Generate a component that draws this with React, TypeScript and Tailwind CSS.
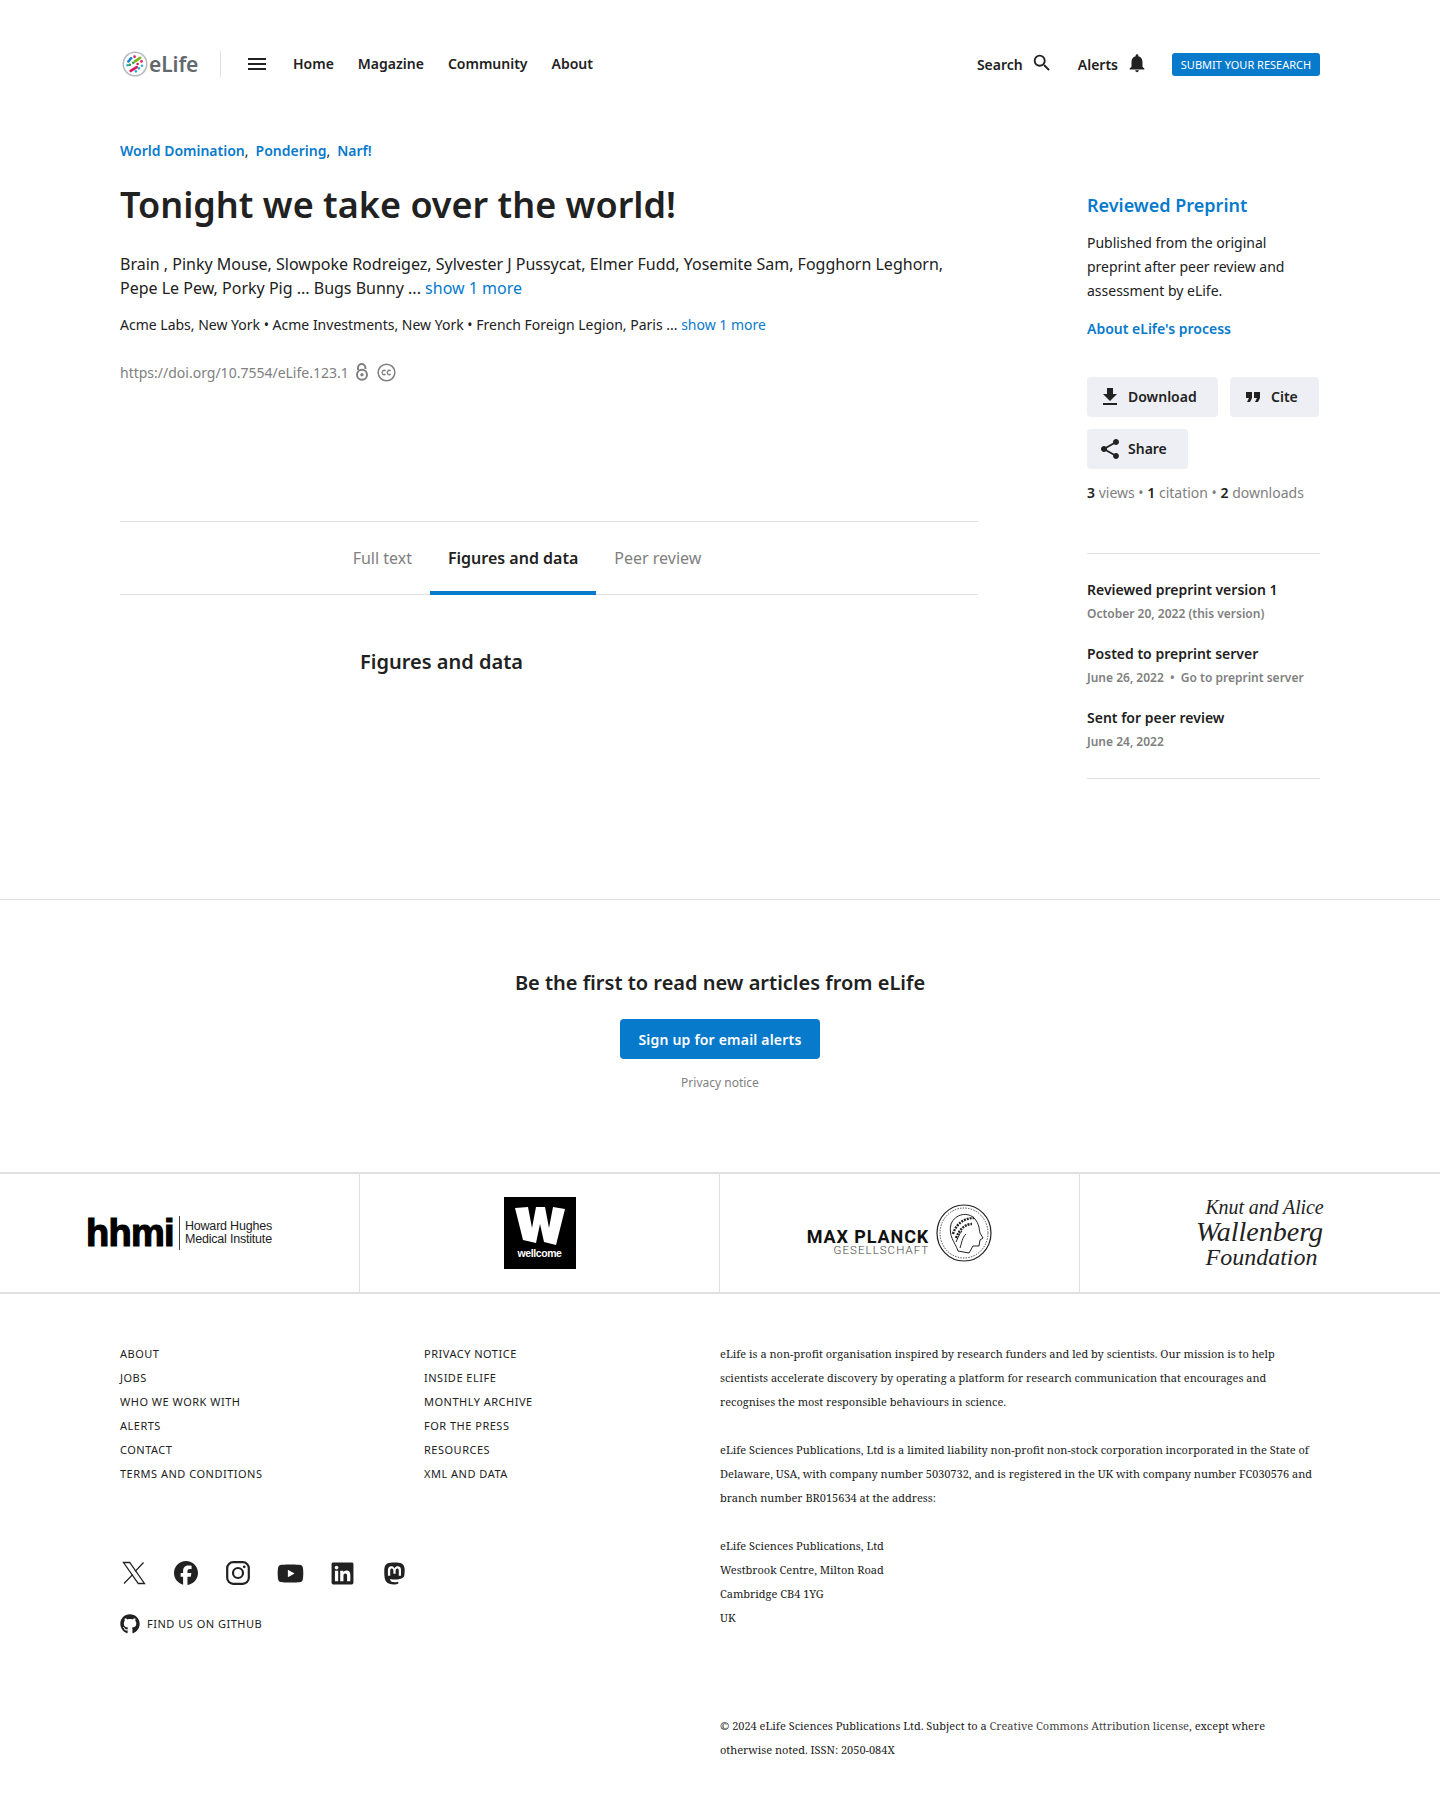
import React from "react";
import { FaFacebook, FaYoutube, FaLinkedin, FaMastodon, FaGithub } from "react-icons/fa6";
import { MdSearch, MdNotifications, MdFileDownload, MdFormatQuote, MdShare, MdMenu } from "react-icons/md";

const SANS = "font-['Noto_Sans',sans-serif]";

function Logo() {
  const d: [number, number, string][] = [
    [10.5, 8.5, "#0a7cc7"], [14.5, 6.5, "#d81b60"], [7.5, 12, "#0a7cc7"], [6.5, 16.5, "#29a9e0"], [18, 15, "#d81b60"], [13, 13.5, "#2e9e3f"],
    [9, 16, "#2e9e3f"], [22.5, 12, "#d81b60"], [23, 17, "#29a9e0"], [19.5, 20, "#29a9e0"], [16, 23.5, "#29a9e0"], [9, 10, "#0a7cc7"],
  ];
  return (
    <svg width="26" height="26" viewBox="0 0 30 30">
      <circle cx="15" cy="15" r="13.6" fill="#fff" stroke="#b9bcbf" strokeWidth="1.8" />
      {d.map(([x, y, c], i) => <circle key={i} cx={x} cy={y} r="1.5" fill={c} />)}
      <path d="M15 12 L21 8" stroke="#7ab51d" strokeWidth="3" strokeLinecap="round" />
      <path d="M10 23 L17 18.5" stroke="#d81b60" strokeWidth="3" strokeLinecap="round" />
    </svg>
  );
}

function OpenAccess() {
  return (
    <svg width="14" height="18" viewBox="0 0 14 18" fill="none" stroke="#808080" strokeWidth="2">
      <path d="M3 7 V4.7 a3.7 3.7 0 0 1 7.4 0 V6" />
      <circle cx="7" cy="11.7" r="5" />
      <circle cx="7" cy="11.7" r="1.7" fill="#808080" stroke="none" />
    </svg>
  );
}

function CC() {
  return (
    <svg width="19" height="19" viewBox="0 0 20 20" fill="none" stroke="#808080">
      <circle cx="10" cy="10" r="8.8" strokeWidth="1.6" />
      <path d="M9 8.3 a2.2 2.2 0 1 0 0 3.4 M14.4 8.3 a2.2 2.2 0 1 0 0 3.4" strokeWidth="1.4" />
    </svg>
  );
}

function XLogo() {
  return (
    <svg width="24" height="24" viewBox="0 0 24 24" fill="none" stroke="#212121" strokeWidth="1.3">
      <path d="M1.5 1.5 H7.7 L22.5 22.5 H16.3 Z" />
      <path d="M21.5 1.5 L13.2 10.4 M10.6 13.6 L2 22.5" />
    </svg>
  );
}

function Insta() {
  return (
    <svg width="24" height="24" viewBox="0 0 24 24" fill="none" stroke="#212121" strokeWidth="2.2">
      <rect x="1.2" y="1.2" width="21.6" height="21.6" rx="6" />
      <circle cx="12" cy="12" r="5" />
      <circle cx="18.2" cy="5.8" r="1.4" fill="#212121" stroke="none" />
    </svg>
  );
}

function Btn({ icon, label, w }: { icon: React.ReactNode; label: string; w: string }) {
  return (
    <div className={`h-10 ${w} rounded bg-[#eeeff4] flex items-center pl-[11px] text-[#212121] text-sm font-semibold leading-none`}>
      <span className="w-6 flex justify-center mr-[6px]">{icon}</span>
      <span>{label}</span>
    </div>
  );
}

function Logos() {
  return (
    <div className="flex h-[122px] border-y-2 border-[#e0e0e0]">
      <div className="w-[360px] flex items-center justify-center border-r border-[#e0e0e0]">
        <div className="flex items-center mr-[1px]">
          <span className="font-['Liberation_Sans',sans-serif] font-bold text-[#000] text-[38px] leading-none tracking-[-0.7px] [-webkit-text-stroke:1.2px_#000]">hhmi</span>
          <span className="w-px h-[34px] bg-[#444] ml-[5px] mr-[5px]"></span>
          <span className="font-['Liberation_Sans',sans-serif] text-[#222] text-[12.5px] leading-[13px] tracking-[-0.2px]">Howard Hughes<br />Medical Institute</span>
        </div>
      </div>
      <div className="w-[360px] flex items-center justify-center border-r border-[#e0e0e0]">
        <div className="w-[72px] h-[72px] bg-black flex flex-col items-center pt-[10px]">
          <svg width="50" height="38" viewBox="0 0 50 38"><path fill="#fff" d="M0 1 L13 0 L17 21 L21 0 L30 0 L34 21 L38 0 L50 2 L41 38 L29 35 L25 17 L21 36 L8 33 Z" /></svg>
          <span className="font-['Liberation_Sans',sans-serif] text-white font-bold text-[10.5px] leading-none mt-[3px] tracking-[-0.4px]">wellcome</span>
        </div>
      </div>
      <div className="w-[360px] flex items-center justify-center border-r border-[#e0e0e0]">
        <div className="flex items-center">
          <div className="flex flex-col items-end mt-[17px] font-['Roboto',sans-serif]">
            <span className="font-bold text-[#111] text-[18px] leading-[17px] tracking-[0.9px]">MAX PLANCK</span>
            <span className="font-light text-[#444] text-[11.5px] leading-[11px] tracking-[1.05px]">GESELLSCHAFT</span>
          </div>
          <svg width="56" height="58" viewBox="0 0 56 58" className="ml-[7px]" fill="none" stroke="#222">
            <ellipse cx="28" cy="29" rx="27" ry="28" strokeWidth="1.2" />
            <ellipse cx="28" cy="29" rx="24" ry="25" strokeWidth="0.8" strokeDasharray="1.5 1.2" />
            <path d="M22 47 C19 38 12 32 15 20 C19 10 32 7 39 15 C43 20 43 24 44 29 L47 34 L44 36 L43 42 L37 42 L33 49 Z" strokeWidth="1" fill="#fff" />
            <path d="M17 30 C20 20 28 14 38 14 M20 34 C24 24 30 20 36 20" strokeWidth="2.4" strokeDasharray="2 1" />
            <path d="M24 44 C26 38 26 34 30 30 M20 38 C22 34 23 30 26 27" strokeWidth="1" />
          </svg>
        </div>
      </div>
      <div className="w-[360px] flex items-center justify-center">
        <div className="font-['Liberation_Serif',serif] italic text-[#222] text-center -ml-[1px] -mt-[3px]">
          <div className="text-[20px] leading-[24px] ml-[10px] tracking-[-0.1px]">Knut and Alice</div>
          <div className="text-[28px] leading-[26px]">Wallenberg</div>
          <div className="text-[24px] leading-[24px] ml-[4px]">Foundation</div>
        </div>
      </div>
    </div>
  );
}

function Social({ children }: { children: React.ReactNode }) {
  return <span className="w-[28px] h-[28px] flex items-center justify-center">{children}</span>;
}

export default function App() {
  const L1 = ["ABOUT", "JOBS", "WHO WE WORK WITH", "ALERTS", "CONTACT", "TERMS AND CONDITIONS"];
  const L2 = ["PRIVACY NOTICE", "INSIDE ELIFE", "MONTHLY ARCHIVE", "FOR THE PRESS", "RESOURCES", "XML AND DATA"];
  return (
    <div className={`${SANS} bg-white text-[#212121] w-[1440px] h-[1798px] overflow-hidden`}>
      {/* Header */}
      <header className="w-[1200px] mx-auto pt-[48px] h-[130px] flex items-start">
        <div className="flex items-center h-[32px] w-full">
          <div className="flex items-center pl-[2px] w-[101px] border-r border-[#e0e0e0] h-[26px]">
            <Logo />
            <span className="text-[#63686d] font-semibold text-[21px] leading-none ml-[1px] tracking-[-0.1px]">eLife</span>
          </div>
          <MdMenu size={24} className="ml-[24px] text-[#212121]" />
          <nav className="flex gap-[24px] ml-[24px] text-sm font-semibold leading-none">
            <span>Home</span><span>Magazine</span><span>Community</span><span>About</span>
          </nav>
          <div className="ml-auto flex items-center text-sm font-semibold leading-none">
            <span className="mt-[1px]">Search</span>
            <MdSearch size={22} className="ml-[8px] -mt-[3px]" />
            <span className="ml-[25px] mt-[1px]">Alerts</span>
            <MdNotifications size={22} className="ml-[8px] -mt-[3px]" />
            <span className="ml-[24px] bg-[#087acc] text-white font-normal text-[11px] leading-none rounded-[3px] h-[23px] w-[148px] flex items-center justify-center mt-[1px]">SUBMIT YOUR RESEARCH</span>
          </div>
        </div>
      </header>

      {/* Main */}
      <div className="w-[1200px] mx-auto flex h-[769px]">
        <main className="w-[858px]">
          <div className="text-sm font-semibold text-[#087acc] leading-[20px] mt-[11px]">
            World Domination<span className="text-[#212121] font-normal mr-[7px]">,</span>Pondering<span className="text-[#212121] font-normal mr-[7px]">,</span>Narf!
          </div>
          <h1 className="text-[36px] font-semibold leading-[44px] mt-[22px] text-[#212121]">Tonight we take over the world!</h1>
          <p className="text-[16px] leading-[24px] mt-[25px] text-[#212121]">
            Brain , Pinky Mouse, Slowpoke Rodreigez, Sylvester J Pussycat, Elmer Fudd, Yosemite Sam, Fogghorn Leghorn, Pepe Le Pew, Porky Pig ... Bugs Bunny ... <span className="text-[#087acc]">show 1 more</span>
          </p>
          <p className="text-[14px] leading-[24px] mt-[13px] text-[#212121]">
            Acme Labs, New York • Acme Investments, New York • French Foreign Legion, Paris ... <span className="text-[#087acc]">show 1 more</span>
          </p>
          <div className="flex items-center mt-[23px] text-[14px] text-[#808080] h-[24px]">
            <span>https://doi.org/10.7554/eLife.123.1</span>
            <span className="ml-[6px] flex"><OpenAccess /></span>
            <span className="ml-[8px] flex"><CC /></span>
          </div>
          <div className="mt-[137px] border-y border-[#e0e0e0] h-[74px] flex justify-center text-[16px]">
            <div className="flex mr-[44px]">
              <span className="px-[18px] flex items-center text-[#808080]">Full text</span>
              <span className="px-[18px] flex items-center font-semibold text-[#212121] border-b-[4px] border-[#087acc] -mb-px pt-[3px]">Figures and data</span>
              <span className="px-[18px] flex items-center text-[#808080]">Peer review</span>
            </div>
          </div>
          <h2 className="ml-[240px] mt-[49px] text-[20px] font-semibold leading-[36px]">Figures and data</h2>
        </main>
        <aside className="w-[233px] ml-[109px] pt-[61px]">
          <div className="text-[18px] font-semibold text-[#087acc] leading-[28px]">Reviewed Preprint</div>
          <p className="text-[14px] leading-[24px] mt-[12px] text-[#212121]">Published from the original preprint after peer review and assessment by eLife.</p>
          <div className="text-[14px] font-semibold text-[#087acc] leading-[24px] mt-[14px]">About eLife's process</div>
          <div className="flex flex-wrap gap-x-3 gap-y-3 mt-[36px]">
            <Btn icon={<MdFileDownload size={24} />} label="Download" w="w-[131px]" />
            <Btn icon={<MdFormatQuote size={24} />} label="Cite" w="w-[89px]" />
            <Btn icon={<MdShare size={24} />} label="Share" w="w-[101px]" />
          </div>
          <div className="text-[14px] leading-[24px] mt-[12px] text-[#808080]">
            <span className="font-semibold text-[#212121]">3</span> views • <span className="font-semibold text-[#212121]">1</span> citation • <span className="font-semibold text-[#212121]">2</span> downloads
          </div>
          <div className="border-y border-[#e0e0e0] mt-[48px] pt-[24px] pb-[24px]">
            <div className="text-[14px] font-semibold leading-[24px]">Reviewed preprint version 1</div>
            <div className="text-[12px] font-semibold text-[#808080] leading-[24px]">October 20, 2022 (this version)</div>
            <div className="text-[14px] font-semibold leading-[24px] mt-[16px]">Posted to preprint server</div>
            <div className="text-[12px] font-semibold text-[#808080] leading-[24px]">June 26, 2022 &nbsp;•&nbsp; Go to preprint server</div>
            <div className="text-[14px] font-semibold leading-[24px] mt-[16px]">Sent for peer review</div>
            <div className="text-[12px] font-semibold text-[#808080] leading-[24px]">June 24, 2022</div>
          </div>
        </aside>
      </div>

      {/* Alerts */}
      <section className="border-t border-[#e0e0e0] h-[273px] flex flex-col items-center">
        <h3 className="text-[20px] font-semibold leading-[28px] mt-[69px]">Be the first to read new articles from eLife</h3>
        <div className="mt-[22px] w-[200px] h-10 rounded bg-[#087acc] text-white text-[14px] font-semibold flex items-center justify-center tracking-[0.2px]">Sign up for email alerts</div>
        <div className="text-[12px] text-[#808080] mt-[14px] leading-[20px]">Privacy notice</div>
      </section>

      <Logos />

      {/* Footer */}
      <footer className="w-[1200px] mx-auto flex pt-[48px]">
        <div className="w-[600px]">
          <div className="flex">
            <ul className="w-[304px] text-[11px] leading-[24px] tracking-[0.5px] text-[#212121]">
              {L1.map((t) => <li key={t}>{t}</li>)}
            </ul>
            <ul className="text-[11px] leading-[24px] tracking-[0.5px] text-[#212121]">
              {L2.map((t) => <li key={t}>{t}</li>)}
            </ul>
          </div>
          <div className="flex mt-[73px] h-[28px] items-center text-[#212121] gap-[24px]">
            <Social><XLogo /></Social>
            <Social><FaFacebook size={24} /></Social>
            <Social><Insta /></Social>
            <Social><FaYoutube size={27} /></Social>
            <Social><FaLinkedin size={25} /></Social>
            <Social><FaMastodon size={25} /></Social>
          </div>
          <div className="flex items-center mt-[27px] text-[11px] tracking-[0.5px]">
            <FaGithub size={20} />
            <span className="ml-[7px]">FIND US ON GITHUB</span>
          </div>
        </div>
        <div className="w-[600px] font-['Noto_Serif','DejaVu_Serif',serif] text-[11px] leading-[24px] text-[#212121]">
          <p>eLife is a non-profit organisation inspired by research funders and led by scientists. Our mission is to help scientists accelerate discovery by operating a platform for research communication that encourages and recognises the most responsible behaviours in science.</p>
          <p className="mt-[24px]">eLife Sciences Publications, Ltd is a limited liability non-profit non-stock corporation incorporated in the State of Delaware, USA, with company number 5030732, and is registered in the UK with company number FC030576 and branch number BR015634 at the address:</p>
          <p className="mt-[24px]">eLife Sciences Publications, Ltd<br />Westbrook Centre, Milton Road<br />Cambridge CB4 1YG<br />UK</p>
          <p className="mt-[84px]">© 2024 eLife Sciences Publications Ltd. Subject to a <span className="text-[#444]">Creative Commons Attribution license</span>, except where otherwise noted. ISSN: 2050-084X</p>
        </div>
      </footer>
    </div>
  );
}
